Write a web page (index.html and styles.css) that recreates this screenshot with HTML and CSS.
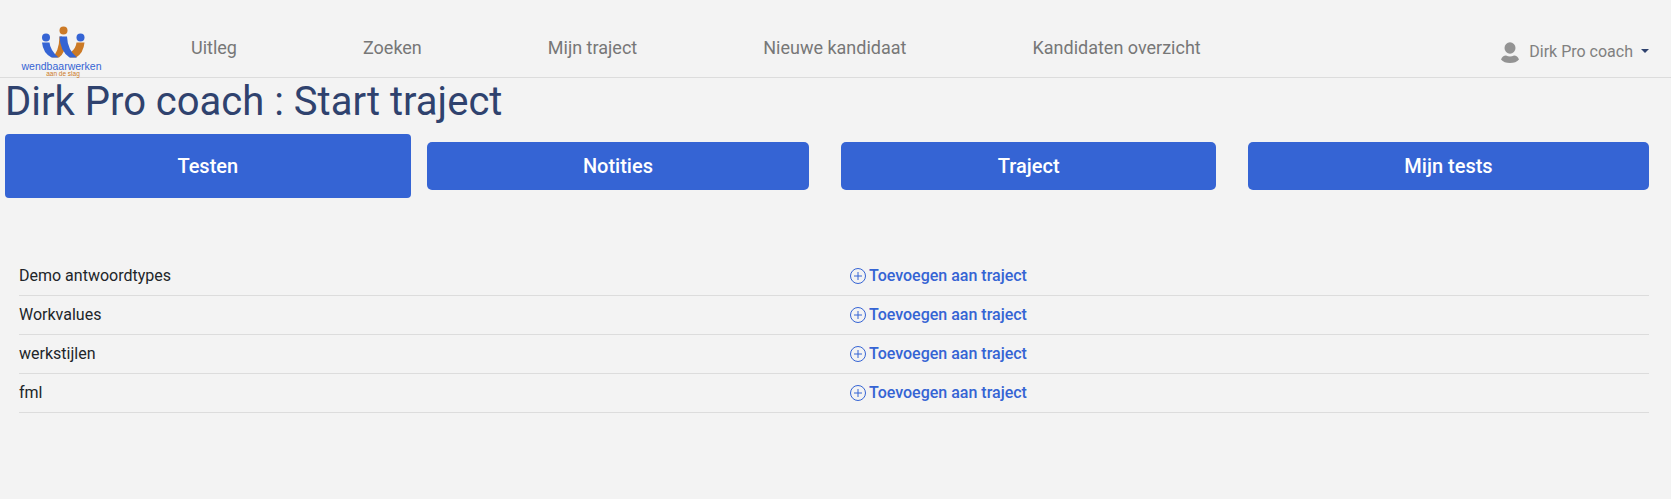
FILE: index.html
```html
<!DOCTYPE html>
<html lang="nl">
<head>
<meta charset="utf-8">
<meta name="viewport" content="width=device-width, initial-scale=1">
<title>Start traject</title>
<link rel="stylesheet" href="styles.css">
</head>
<body>
<header class="header">
  <a class="logo" href="#" aria-label="wendbaarwerken">
    <svg width="84" height="52" viewBox="0 0 168 104" aria-hidden="true">
      <path fill="#cc7a26" d="M79 21H84L88 50Q84 59 78 63H64Q78 52 79 21Z"/>
      <path fill="#3564d4" d="M44 33H59Q60 48 77 63H63Q46 54 44 33Z"/>
      <path fill="#cc7a26" d="M113 33H129Q127 54 112 63H100L101 53Q112 45 113 33Z"/>
      <path fill="#3564d4" d="M79 21H94Q95 48 114 63H99Q80 50 79 21Z"/>
      <circle cx="52" cy="23" r="8" fill="#3564d4"/>
      <circle cx="87" cy="9" r="8" fill="#cc7a26"/>
      <circle cx="121" cy="23" r="8" fill="#3564d4"/>
      <text class="logo-name" x="83" y="88" text-anchor="middle">wendbaarwerken</text>
      <text class="logo-tag" x="86" y="99" text-anchor="middle">aan de slag</text>
    </svg>
  </a>
  <nav class="nav">
    <a href="#">Uitleg</a>
    <a href="#">Zoeken</a>
    <a href="#">Mijn traject</a>
    <a href="#">Nieuwe kandidaat</a>
    <a href="#">Kandidaten overzicht</a>
  </nav>
  <button class="user" type="button">
    <svg width="18" height="22" viewBox="0 0 18 22" aria-hidden="true">
      <ellipse cx="9" cy="7" rx="5.500" ry="5.800"/>
      <path d="M0 18.500Q1.500 14.500 5 14.500Q9 16.500 13 14.500Q16.500 14.500 18 18.500Q15 22 9 22T0 18.500Z"/>
    </svg>
    <span class="user-name">Dirk Pro coach</span>
    <span class="caret"></span>
  </button>
</header>
<main class="main">
  <h1 class="title">Dirk Pro coach : Start traject</h1>
  <div class="tabs">
    <button class="tab tab-active" type="button">Testen</button>
    <button class="tab" type="button">Notities</button>
    <button class="tab" type="button">Traject</button>
    <button class="tab" type="button">Mijn tests</button>
  </div>
  <div class="tests">
    <table class="table">
      <tbody>
        <tr><td>Demo antwoordtypes</td><td><a class="add" href="#"><svg width="16" height="16" viewBox="0 0 16 16" aria-hidden="true"><circle cx="8" cy="8" r="7.500"/><path d="M8 4V12M4 8H12"/></svg>Toevoegen aan traject</a></td></tr>
        <tr><td>Workvalues</td><td><a class="add" href="#"><svg width="16" height="16" viewBox="0 0 16 16" aria-hidden="true"><circle cx="8" cy="8" r="7.500"/><path d="M8 4V12M4 8H12"/></svg>Toevoegen aan traject</a></td></tr>
        <tr><td>werkstijlen</td><td><a class="add" href="#"><svg width="16" height="16" viewBox="0 0 16 16" aria-hidden="true"><circle cx="8" cy="8" r="7.500"/><path d="M8 4V12M4 8H12"/></svg>Toevoegen aan traject</a></td></tr>
        <tr><td>fml</td><td><a class="add" href="#"><svg width="16" height="16" viewBox="0 0 16 16" aria-hidden="true"><circle cx="8" cy="8" r="7.500"/><path d="M8 4V12M4 8H12"/></svg>Toevoegen aan traject</a></td></tr>
      </tbody>
    </table>
  </div>
</main>
</body>
</html>
```
FILE: styles.css
```css
* { box-sizing: border-box; }

body {
  margin: 0;
  background: #f3f3f3;
  color: #212529;
  font: 400 16px/22px Roboto, sans-serif;
}

a { color: inherit; text-decoration: none; }

button { border: 0; font: inherit; cursor: pointer; }

.header {
  display: flex;
  align-items: flex-start;
  padding: 26px 20px 0;
  border-bottom: 1px solid #dcdcdc;
}

.logo { flex: none; height: 51px; }
.logo svg { display: block; overflow: visible; }
.logo-name { font: 21px "Liberation Sans", sans-serif; fill: #3564d4; }
.logo-tag { font: 13px "Liberation Sans", sans-serif; fill: #cc7a26; }

.nav {
  display: flex;
  gap: 126px;
  margin-left: 87px;
  padding-top: 11px;
  color: #777;
  font-size: 18px;
  white-space: nowrap;
}

.user {
  display: flex;
  align-items: center;
  gap: 10px;
  margin-left: auto;
  padding: 15px 2px 0 0;
  background: none;
  color: #808080;
  white-space: nowrap;
}
.user svg { fill: #939393; }
.user-name { margin-right: -2px; }

.caret {
  margin-bottom: 2px;
  border: 4px solid transparent;
  border-top-color: #2f426e;
  border-bottom: 0;
}

.main { padding: 0 6px 0 5px; }

.title {
  margin: 0;
  color: #2f426e;
  font-size: 40px;
  font-weight: 400;
  line-height: 48px;
}

.tabs {
  display: flex;
  align-items: center;
  padding-top: 8px;
}

.tab {
  flex: 1 1 auto;
  height: 48px;
  margin: 0 16px;
  padding: 0;
  border-radius: 5px;
  background: #3564d4;
  color: #fff;
  font-size: 20px;
  font-weight: 500;
}
.tab-active {
  height: 64px;
  margin: 0;
  padding: 0 16px;
  border-radius: 4px;
}

.tests { padding: 59px 16px 0 14px; }

.table {
  width: 100%;
  border-collapse: separate;
  border-spacing: 0;
  table-layout: fixed;
}
.table td {
  padding: 8px 0;
  border-bottom: 1px solid #dcdcdc;
}
.table td + td { padding-left: 16px; }

.add {
  display: flex;
  align-items: center;
  gap: 3px;
  color: #3564d4;
  font-weight: 500;
}
.add svg { fill: none; stroke: #3564d4; }
```
